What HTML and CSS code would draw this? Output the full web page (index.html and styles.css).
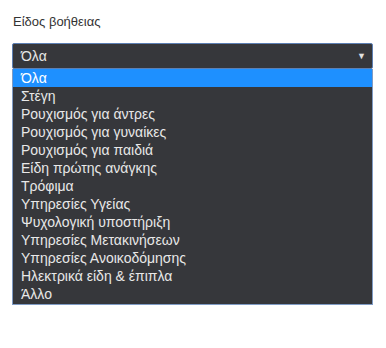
FILE: index.html
```html
<!DOCTYPE html>
<html lang="el">

<head>
    <meta charset="UTF-8">
    <meta name="viewport" content="width=device-width, initial-scale=1.0">
    <title>Είδος βοήθειας</title>
    <link rel="stylesheet" href="styles.css">
</head>

<body>
    <div class="form-group">
        <label class="field-label">Είδος βοήθειας</label>
        <div class="select-box">
            <div class="select-current">
                <span>Όλα</span>
                <span class="arrow">&#9660;</span>
            </div>
            <ul class="options">
                <li class="option selected">Όλα</li>
                <li class="option">Στέγη</li>
                <li class="option">Ρουχισμός για άντρες</li>
                <li class="option">Ρουχισμός για γυναίκες</li>
                <li class="option">Ρουχισμός για παιδιά</li>
                <li class="option">Είδη πρώτης ανάγκης</li>
                <li class="option">Τρόφιμα</li>
                <li class="option">Υπηρεσίες Υγείας</li>
                <li class="option">Ψυχολογική υποστήριξη</li>
                <li class="option">Υπηρεσίες Μετακινήσεων</li>
                <li class="option">Υπηρεσίες Ανοικοδόμησης</li>
                <li class="option">Ηλεκτρικά είδη &amp; έπιπλα</li>
                <li class="option">Άλλο</li>
            </ul>
        </div>
    </div>
</body>

</html>
```

FILE: styles.css
```css
body {
    margin: 0;
    padding: 0;
    background-color: #ffffff;
    font-family: "Liberation Sans", Arial, sans-serif;
}

.form-group {
    padding: 14px 13px 0 12px;
}

.field-label {
    display: block;
    font-size: 13px;
    color: #333;
    line-height: 16px;
    padding-left: 1px;
    margin-bottom: 13px;
}

.select-box {
    width: 361px;
}

.select-current {
    display: flex;
    justify-content: space-between;
    align-items: center;
    height: 24px;
    padding: 0 6px 0 8px;
    background-color: #36373b;
    border: 1px solid #5d7fb3;
    border-radius: 2px;
    color: #e6e6e6;
    font-size: 14px;
}

.arrow {
    font-size: 9px;
    color: #e0e0e0;
}

.options {
    list-style: none;
    margin: 0;
    padding: 0 0 1px;
    background-color: #36373b;
    border: 1px solid #7f9bc4;
    border-top: none;
}

.option {
    height: 18px;
    line-height: 18px;
    padding-left: 8px;
    color: #e8e8e8;
    font-size: 14px;
}

.option.selected {
    background-color: #1e90ff;
    color: #ffffff;
}
```
